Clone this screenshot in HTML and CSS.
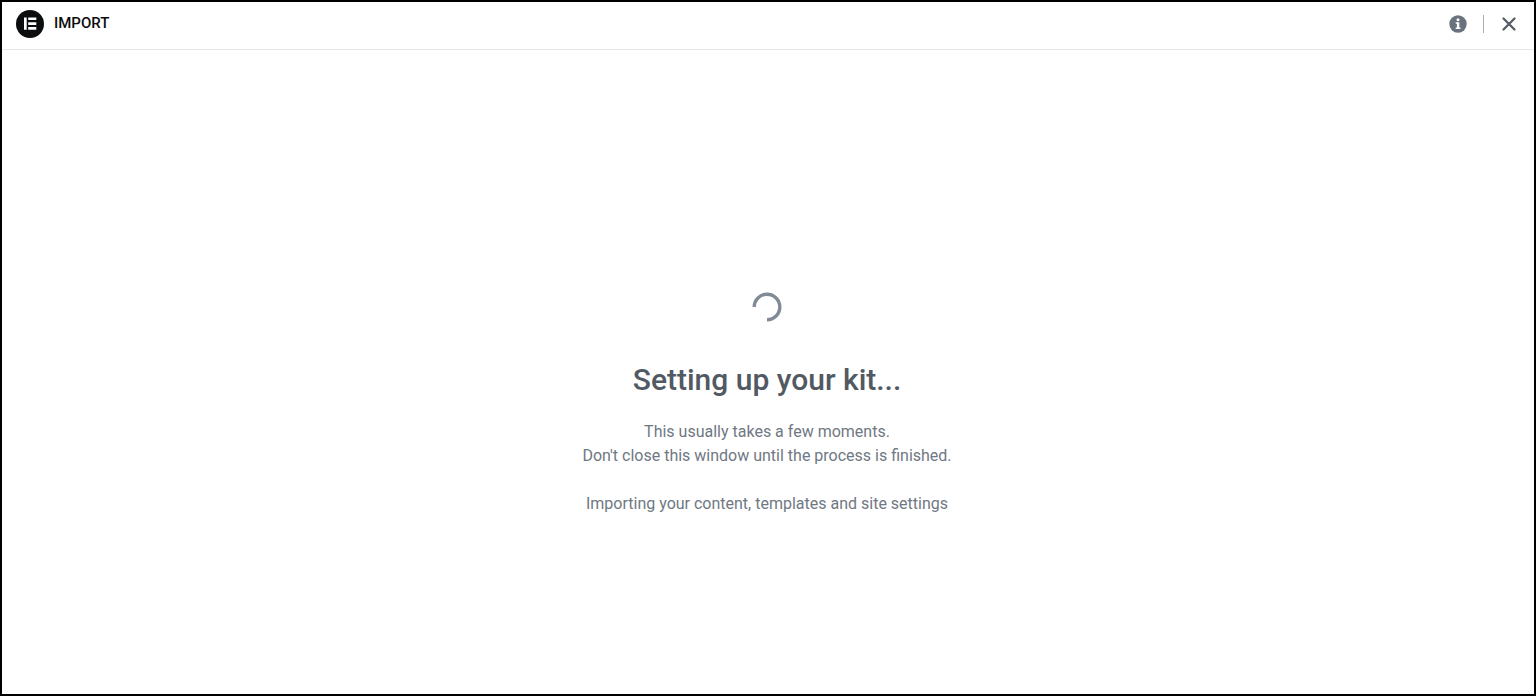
FILE: index.html
```html
<!DOCTYPE html>
<html lang="en">
<head>
  <meta charset="UTF-8" />
  <meta name="viewport" content="width=device-width, initial-scale=1.0"/>
  <title>Import</title>
  <link rel="stylesheet" href="styles.css">
</head>
<body>
  <div class="app">
    <header class="header">
      <div class="brand">
        <svg class="logo" viewBox="0 0 28 28" aria-hidden="true">
          <circle cx="14" cy="14" r="14" fill="#0c0d0e"/>
          <path fill="#fff" d="M8 7.500h2.700v12.200H8zM12.200 7.500h8.100v2.600h-8.100zM12.200 12.300h8.100v2.600h-8.100zM12.200 17.100h8.100v2.600h-8.100z"/>
        </svg>
        <h1 class="header-title">IMPORT</h1>
      </div>
      <div class="actions">
        <button class="icon-btn" type="button" aria-label="Info">
          <svg class="icon" viewBox="0 0 18 18">
            <circle cx="9" cy="9" r="8.700" fill="#69727d"/>
            <circle cx="9" cy="4.700" r="1.500" fill="#fff"/>
            <path fill="#fff" d="M6.700 7.200h3.600v5.200h1.200v1.600H6.700v-1.600h1.200V8.800H6.700z"/>
          </svg>
        </button>
        <span class="divider"></span>
        <button class="icon-btn" type="button" aria-label="Close">
          <svg class="icon" viewBox="0 0 18 18">
            <path d="M3.500 3.500l11 11M14.500 3.500l-11 11" fill="none" stroke="#515962" stroke-width="2.200" stroke-linecap="round"/>
          </svg>
        </button>
      </div>
    </header>

    <main class="content">
      <svg class="spinner" viewBox="0 0 30 30" role="img" aria-label="Loading">
        <path d="M2.200 15A12.800 12.800 0 1 1 15 27.800" fill="none" stroke="#818a96" stroke-width="3.400"/>
      </svg>
      <h2 class="heading">Setting up your kit...</h2>
      <p class="text">This usually takes a few moments.<br>Don't close this window until the process is finished.</p>
      <p class="text">Importing your content, templates and site settings</p>
    </main>
  </div>
</body>
</html>
```

FILE: styles.css
```css
* {
  box-sizing: border-box;
}
body {
  margin: 0;
  font-family: Roboto, Arial, sans-serif;
  background: #fff;
  color: #6f7883;
}
.app {
  display: flex;
  flex-direction: column;
  min-height: 100vh;
  border: 2px solid #000;
}
.header {
  display: flex;
  align-items: center;
  justify-content: space-between;
  height: 48px;
  padding: 0 16px 4px 14px;
  border-bottom: 1px solid #e6e9ec;
}
.brand {
  display: flex;
  align-items: center;
  gap: 10px;
}
.logo {
  width: 28px;
  height: 28px;
}
.header-title {
  margin: 0;
  padding-bottom: 2px;
  font-size: 15px;
  line-height: 20px;
  font-weight: 500;
  color: #0c0d0e;
}
.actions {
  display: flex;
  align-items: center;
  gap: 16px;
}
.icon-btn {
  display: flex;
  padding: 0;
  border: none;
  background: none;
  cursor: pointer;
}
.icon {
  width: 18px;
  height: 18px;
}
.divider {
  width: 1px;
  height: 18px;
  background: #a4afb7;
}

/* Loading state */
.content {
  flex: 1;
  display: flex;
  flex-direction: column;
  align-items: center;
  justify-content: center;
  padding: 88px 2px 0 0;
  text-align: center;
}
.spinner {
  width: 30px;
  height: 30px;
}
.heading {
  margin: 36px 0 18px;
  font-size: 30px;
  line-height: 44px;
  font-weight: 500;
  color: #515962;
}
.text {
  margin: 0 0 24px;
  font-size: 16px;
  line-height: 24px;
}
```
